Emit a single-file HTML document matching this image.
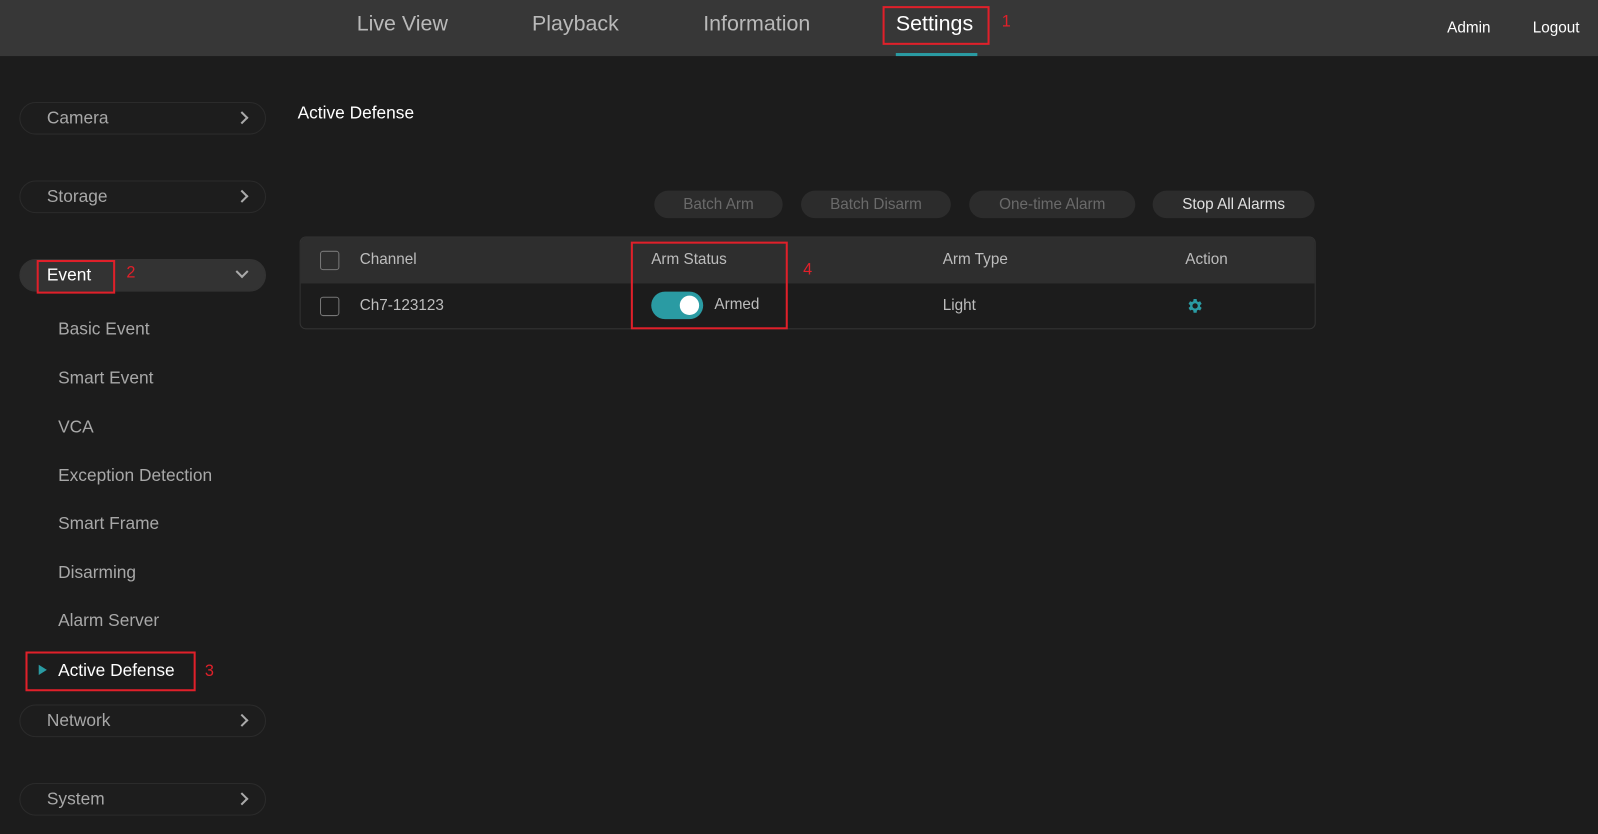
<!DOCTYPE html><html><head><style>
body{margin:0;background:#1c1c1c;overflow:hidden;font-family:"Liberation Sans",sans-serif}
#w{position:absolute;left:0;top:0;width:1568px;height:818px;transform:scale(1.01913,1.01956);transform-origin:0 0;background:#1c1c1c}
.a{position:absolute;white-space:nowrap}
.top{position:absolute;left:0;top:0;width:1568px;height:55px;background:#373737}
.nav{font-size:21px;color:#b9b9b9;top:12px}
.pill{position:absolute;left:19px;width:240px;height:30px;border:1px solid #2b2b2b;border-radius:16px;background:#1d1d1d}
.pill span{position:absolute;left:26px;top:5px;font-size:17px;color:#a8a8a8}
.chev{position:absolute;left:213px;top:10px;width:7px;height:7px;border-right:2px solid #aaa;border-top:2px solid #aaa;transform:rotate(45deg)}
.sub{font-size:17px;color:#a8a8a8;left:57px}
.red{position:absolute;border:2px solid #e0202a}
.num{color:#e0202a;font-size:16px}
.btn{position:absolute;top:187px;height:27px;border-radius:14px;background:#2c2c2c;color:#6a6a6a;font-size:15px;text-align:center;line-height:27px}
.cb{position:absolute;left:314px;width:17px;height:17px;border:1.5px solid #777;border-radius:3px}
.th{font-size:15px;color:#bdbdbd}
</style></head><body><div id="w">
<div class="top"></div>
<div class="a nav" style="left:350px">Live View</div>
<div class="a nav" style="left:522px">Playback</div>
<div class="a nav" style="left:690px">Information</div>
<div class="a nav" style="left:879px;color:#fff">Settings</div>
<div class="red" style="left:866px;top:6px;width:101px;height:34px"></div>
<div class="a num" style="left:983px;top:13px">1</div>
<div class="a" style="left:879px;top:52px;width:80px;height:3px;background:#2a9ba3"></div>
<div class="a" style="left:1420px;top:19px;font-size:15px;color:#fff">Admin</div>
<div class="a" style="left:1504px;top:19px;font-size:15px;color:#fff">Logout</div>

<div class="pill" style="top:100px"><span>Camera</span><i class="chev"></i></div>
<div class="pill" style="top:177px"><span>Storage</span><i class="chev"></i></div>
<div class="pill" style="top:254px;background:#333;border-color:#333"><span style="color:#fff;left:26px">Event</span><i class="chev" style="transform:rotate(135deg);top:7px"></i></div>
<div class="red" style="left:36px;top:255px;width:73px;height:29px"></div>
<div class="a num" style="left:124px;top:259px">2</div>
<div class="a sub" style="top:313px">Basic Event</div>
<div class="a sub" style="top:361px">Smart Event</div>
<div class="a sub" style="top:409px">VCA</div>
<div class="a sub" style="top:457px">Exception Detection</div>
<div class="a sub" style="top:504px">Smart Frame</div>
<div class="a sub" style="top:552px">Disarming</div>
<div class="a sub" style="top:599px">Alarm Server</div>
<div class="a sub" style="top:648px;color:#fff">Active Defense</div>
<div class="a" style="left:38px;top:652px;border-left:8px solid #2a9ba3;border-top:5px solid transparent;border-bottom:5px solid transparent"></div>
<div class="red" style="left:25px;top:639px;width:163px;height:35px"></div>
<div class="a num" style="left:201px;top:650px">3</div>
<div class="pill" style="top:691px"><span>Network</span><i class="chev"></i></div>
<div class="pill" style="top:768px"><span>System</span><i class="chev"></i></div>

<div class="a" style="left:292px;top:101px;font-size:17px;color:#fff">Active Defense</div>
<div class="btn" style="left:642px;width:126px">Batch Arm</div>
<div class="btn" style="left:786px;width:147px">Batch Disarm</div>
<div class="btn" style="left:951px;width:163px">One-time Alarm</div>
<div class="btn" style="left:1131px;width:159px;color:#e0e0e0">Stop All Alarms</div>

<div class="a" style="left:294px;top:232px;width:995px;height:89px;border:1px solid #333;border-radius:6px;background:#1c1c1c;overflow:hidden"><div style="height:45px;background:#2e2e2e"></div></div>
<div class="cb" style="top:246px"></div>
<div class="cb" style="top:291px"></div>
<div class="a th" style="left:353px;top:246px">Channel</div>
<div class="a th" style="left:639px;top:246px">Arm Status</div>
<div class="a th" style="left:925px;top:246px">Arm Type</div>
<div class="a th" style="left:1163px;top:246px">Action</div>
<div class="a th" style="left:353px;top:291px">Ch7-123123</div>
<div class="a" style="left:639px;top:286px;width:51px;height:27px;border-radius:14px;background:#2a9ba3"><div style="position:absolute;right:4px;top:4px;width:19px;height:19px;border-radius:50%;background:#fff"></div></div>
<div class="a th" style="left:701px;top:290px">Armed</div>
<div class="a th" style="left:925px;top:291px">Light</div>
<svg class="a" style="left:1163px;top:291px" width="18" height="18" viewBox="0 0 24 24"><path fill="#2a9ba3" d="M19.4 13a7.5 7.5 0 0 0 0-2l2.1-1.6-2-3.5-2.5 1a7 7 0 0 0-1.7-1L14.9 3h-4l-.4 2.9a7 7 0 0 0-1.7 1l-2.5-1-2 3.5L6.4 11a7.5 7.5 0 0 0 0 2l-2.1 1.6 2 3.5 2.5-1a7 7 0 0 0 1.7 1l.4 2.9h4l.4-2.9a7 7 0 0 0 1.7-1l2.5 1 2-3.5zM12.9 15.5a3.5 3.5 0 1 1 0-7 3.5 3.5 0 0 1 0 7z"/></svg>
<div class="red" style="left:619px;top:237px;width:150px;height:82px"></div>
<div class="a num" style="left:788px;top:256px">4</div>
</div></body></html>
